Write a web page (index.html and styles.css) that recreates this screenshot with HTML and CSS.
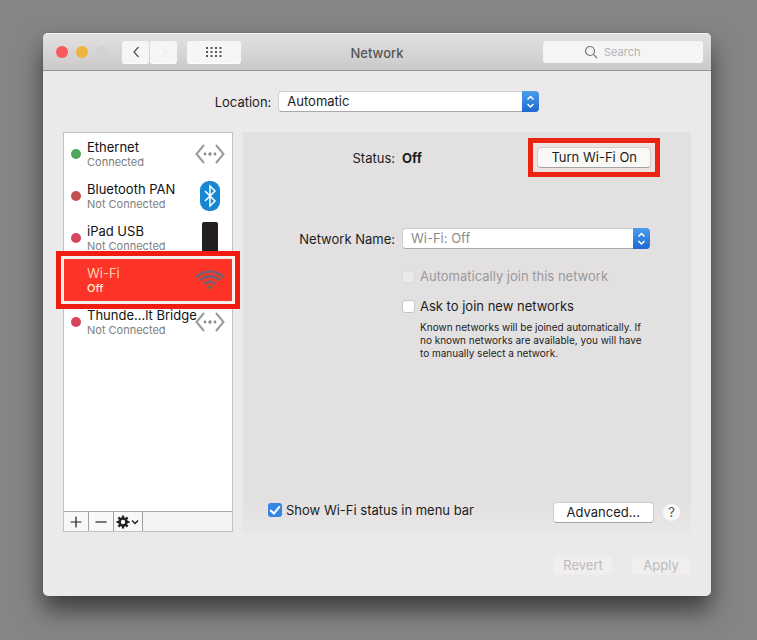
FILE: index.html
```html
<!DOCTYPE html>
<html lang="en">
<head>
<meta charset="utf-8">
<title>Network</title>
<link rel="stylesheet" href="styles.css">
</head>
<body>
<svg class="defs" aria-hidden="true">
  <symbol id="ethernet" viewBox="0 0 32 22">
    <path d="M10 2L2.500 11l7.500 9M22 2L29.500 11l-7.500 9" fill="none" stroke="#9a9a9a" stroke-width="2"/>
    <g fill="#8a8a8a"><circle cx="11" cy="11" r="1.400"/><circle cx="16" cy="11" r="1.700"/><circle cx="21" cy="11" r="1.400"/></g>
  </symbol>
  <symbol id="updown" viewBox="0 0 17 20">
    <path d="M5.500 8L8.500 5l3 3M5.500 12.500l3 3 3-3" fill="none" stroke="#fff" stroke-width="1.500"/>
  </symbol>
</svg>
<main class="window">
  <header class="titlebar">
    <div class="tools">
      <div class="lights"><i class="light close"></i><i class="light minimize"></i><i class="light"></i></div>
      <div class="nav">
        <button class="tool" aria-label="Back"><svg width="10" height="14" viewBox="0 0 10 14"><path d="M7.500 2L3 7l4.500 5" fill="none" stroke="#555" stroke-width="1.300"/></svg></button>
        <button class="tool" aria-label="Forward" disabled><svg width="10" height="14" viewBox="0 0 10 14"><path d="M3 2l4.500 5L3 12" fill="none" stroke="#ededed" stroke-width="1.300"/></svg></button>
      </div>
      <button class="tool wide" aria-label="Show all"><svg width="16" height="14" viewBox="0 0 16 14"><path d="M0 3h16M0 7h16M0 11h16" stroke="#555" stroke-width="2" stroke-dasharray="2 2.500"/></svg></button>
    </div>
    <h1>Network</h1>
    <div class="search">
      <svg width="14" height="14" viewBox="0 0 14 14" fill="none" stroke="#777" stroke-width="1.200"><circle cx="6" cy="6" r="4.500"/><path d="M9.300 9.300L13 13"/></svg>
      <input type="search" placeholder="Search" aria-label="Search">
    </div>
  </header>
  <div class="content">
    <div class="location">
      <label for="location">Location:</label>
      <div class="popup"><select id="location"><option>Automatic</option></select><svg class="cap"><use href="#updown"/></svg></div>
    </div>
    <div class="columns">
      <aside class="sidebar">
        <ul class="services">
          <li class="service"><i class="dot on"></i><div class="info"><b>Ethernet</b><span>Connected</span></div><svg class="icon"><use href="#ethernet"/></svg></li>
          <li class="service"><i class="dot off"></i><div class="info"><b>Bluetooth PAN</b><span>Not Connected</span></div>
            <svg class="icon tall" viewBox="0 0 32 32"><rect x="6" y="1" width="20" height="30" rx="9" fill="#1787d4"/><path d="M11 11l10 10-5 5V6l5 5-10 10" fill="none" stroke="#fff" stroke-width="1.500"/></svg></li>
          <li class="service"><i class="dot off pink"></i><div class="info"><b>iPad USB</b><span>Not Connected</span></div>
            <svg class="icon tall" viewBox="0 0 32 32"><rect x="8" y="0" width="16" height="31" rx="2" fill="#231f20"/></svg></li>
          <li class="service selected"><i class="dot"></i><div class="info"><b>Wi-Fi</b><span>Off</span></div>
            <svg class="icon" viewBox="0 0 32 22" fill="none" stroke="#75606e" stroke-width="2.600"><path d="M2 8.500C10 .5 22 .5 30 8.500M6 11.500C12 6 20 6 26 11.500M10.500 15c3.500-3 7.500-3 11 0"/><path d="M13 17.500c2-1.500 4-1.500 6 0L16 21z" fill="#6b6a50" stroke="none"/></svg></li>
          <li class="service"><i class="dot off pink"></i><div class="info"><b>Thunde…lt Bridge</b><span>Not Connected</span></div><svg class="icon"><use href="#ethernet"/></svg></li>
        </ul>
        <div class="actions">
          <button aria-label="Add"><svg width="12" height="12" viewBox="0 0 12 12"><path d="M6 .5v11M.5 6h11" stroke="#222" stroke-width="1.200"/></svg></button>
          <button aria-label="Remove"><svg width="12" height="12" viewBox="0 0 12 12"><path d="M.5 6h11" stroke="#222" stroke-width="1.200"/></svg></button>
          <button class="gear" aria-label="Service options"><svg width="24" height="14" viewBox="0 0 24 14" fill="none" stroke="#222"><circle cx="7" cy="7" r="3.500" stroke-width="2.600"/><path d="M7 .5v3M7 10.500v3M.5 7h3M10.500 7h3M2.400 2.400l2.200 2.200M9.400 9.400l2.200 2.200M11.600 2.400L9.400 4.600M4.600 9.400l-2.200 2.200" stroke-width="2.200"/><path d="M16 5.500l3 3 3-3" stroke-width="1.500"/></svg></button>
        </div>
      </aside>
      <section class="panel">
        <div class="field status">
          <span class="label">Status:</span><strong>Off</strong>
          <div class="callout"><button class="button turn-on">Turn Wi-Fi On</button></div>
        </div>
        <div class="field">
          <label class="label" for="network">Network Name:</label>
          <div class="popup"><select id="network" class="muted"><option>Wi-Fi: Off</option></select><svg class="cap"><use href="#updown"/></svg></div>
        </div>
        <div class="options">
          <label class="check disabled"><input type="checkbox" disabled>Automatically join this network</label>
          <label class="check"><input type="checkbox">Ask to join new networks</label>
          <p>Known networks will be joined automatically. If no known networks are available, you will have to manually select a network.</p>
        </div>
        <div class="bottom">
          <label class="check compact"><input type="checkbox" checked>Show Wi-Fi status in menu bar</label>
          <button class="button advanced">Advanced...</button>
          <button class="help" aria-label="Help">?</button>
        </div>
      </section>
    </div>
    <footer class="footer">
      <button class="button" disabled>Revert</button>
      <button class="button" disabled>Apply</button>
    </footer>
  </div>
</main>
</body>
</html>
```
FILE: styles.css
```css
* { box-sizing: border-box; }

body {
  margin: 0;
  min-height: 100vh;
  padding: 33px 46px 44px 43px;
  background: #858585;
  color: #1c1c1c;
  font: 13px/16px Inter, "Liberation Sans", sans-serif;
}

button, select, input { font: inherit; color: inherit; margin: 0; }
.defs { position: absolute; width: 0; height: 0; }

.window {
  border-radius: 5px;
  background: #ebe9ea;
  box-shadow: 0 0 1px #444, 0 14px 24px rgba(0, 0, 0, .55);
}

.titlebar {
  display: grid;
  grid-template-columns: 1fr auto 1fr;
  align-items: center;
  height: 38px;
  padding: 0 8px;
  border-top: 1px solid #f4f4f4;
  border-bottom: 1px solid #959395;
  border-radius: 5px 5px 0 0;
  background: linear-gradient(#e2e0e1, #cbc9ca);
}

.titlebar h1 { margin: 2px 0 0; font-size: 13px; font-weight: 500; color: #555; }
.tools { display: flex; align-items: center; }
.lights { display: flex; gap: 8px; margin-left: 5px; }
.light { width: 12px; height: 12px; border-radius: 50%; background: #d3d1d2; }
.close { background: #f9595c; }
.minimize { background: #eeb43b; }
.nav { display: flex; gap: 1px; margin: 0 10px 0 14px; }

.tool {
  display: flex;
  align-items: center;
  justify-content: center;
  width: 27px;
  height: 22px;
  padding: 0;
  border: 0;
  border-radius: 3px;
  background: #f6f6f6;
  box-shadow: 0 1px 0 #fdfdfd;
}
.tool.wide { width: 54px; }

.search {
  display: flex;
  justify-self: end;
  align-items: center;
  gap: 6px;
  width: 160px;
  height: 22px;
  padding-left: 41px;
  border-radius: 3px;
  background: #f6f5f6;
}
.search svg { flex: none; }
.search input { width: 80px; padding: 0; border: 0; background: none; font-size: 11px; }
.search input::placeholder { color: #b4b4b4; }

.content { padding: 20px 20px 21px; }
.location { display: flex; justify-content: center; align-items: center; gap: 7px; }
.location .popup { width: 261px; }

.popup { position: relative; height: 21px; }
.popup select {
  display: block;
  width: 100%;
  height: 100%;
  padding: 0 22px 1px 8px;
  border: 1px solid #cfcdce;
  border-bottom-color: #a9a9a9;
  border-radius: 4px;
  background: #fff;
  appearance: none;
}
.popup .muted { color: #8b8b8b; }
.cap {
  position: absolute;
  top: 0;
  right: 0;
  width: 17px;
  height: 100%;
  border-radius: 0 4px 4px 0;
  background: linear-gradient(#4a9ee9, #1f69d2);
  pointer-events: none;
}

.columns { display: flex; gap: 10px; margin-top: 20px; }

.sidebar {
  display: flex;
  flex: none;
  flex-direction: column;
  width: 170px;
  min-height: 400px;
  border: 1px solid #c2c2c2;
  background: #fff;
}
.services { flex: 1; margin: 0; padding: 0; list-style: none; }
.service {
  display: flex;
  align-items: center;
  gap: 6px;
  height: 42px;
  padding: 0 6px 0 7px;
}
.dot { flex: none; width: 10px; height: 10px; border-radius: 50%; }
.on { background: #4da75c; }
.off { background: #c44f50; }
.pink { background: #d6455c; }
.info { flex: 1; white-space: nowrap; }
.info b { display: block; font-weight: 400; line-height: 15px; color: #111; }
.info span { display: block; font-size: 11px; line-height: 14px; color: #7d7d7d; }
.icon { flex: none; width: 32px; height: 22px; margin-left: -12px; }
.icon.tall { height: 32px; }

.selected {
  position: relative;
  background: #fd3427;
  box-shadow: 0 0 0 3px #fff0ee, 0 0 0 8px #f01c10;
}
.selected .info b { color: #ffd3b0; }
.selected .info span { color: #fff0d8; font-weight: 500; }

.actions { display: flex; height: 20px; border-top: 1px solid #a8a8a8; background: #f4f4f4; }
.actions button {
  display: flex;
  align-items: center;
  justify-content: center;
  width: 25px;
  padding: 0;
  border: 0;
  border-right: 1px solid #a0a0a0;
  background: #f8f8f8;
}
.actions .gear { width: 29px; }

.panel {
  display: flex;
  flex: 1;
  flex-direction: column;
  padding: 15px 11px 9px 25px;
  background: linear-gradient(#e2e0e1 92%, #e8e6e7);
}
.field {
  display: grid;
  grid-template-columns: 127px 1fr;
  align-items: center;
  column-gap: 7px;
  margin-right: 30px;
}
.status { grid-template-columns: 127px 1fr auto; margin: -9px 20px 51px 0; }
.label { text-align: right; white-space: nowrap; }
strong { font-weight: 700; }

.button {
  height: 21px;
  padding: 0 13px 1px;
  border: 1px solid #cdcbcc;
  border-bottom-color: #a5a5a5;
  border-radius: 4px;
  background: #fff;
}
.button:disabled { border-color: #eeeced; background: #f0eeef; color: #bcbabb; }
.callout { display: flex; padding: 4px; border: 5px solid #ea2410; background: #f1e2e2; }
.turn-on { background: #f9f9f7; }

.options { margin: 19px 30px 0 134px; }
.check { display: flex; align-items: center; gap: 5px; height: 16px; white-space: nowrap; }
.options .check { margin-bottom: 14px; }
.check.compact { gap: 4px; }
.check input {
  width: 13px;
  height: 13px;
  border: 1px solid #c4c4c4;
  border-radius: 3px;
  background: #fff;
  appearance: none;
}
.check input:checked {
  display: grid;
  place-items: center;
  width: 14px;
  height: 14px;
  border: 0;
  background: #3485e4;
}
.check input:checked::after {
  content: "";
  width: 4px;
  height: 8px;
  margin-bottom: 2px;
  border: solid #fff;
  border-width: 0 2px 2px 0;
  rotate: 40deg;
}
.disabled { color: #9b999a; }
.check input:disabled { border-color: #dcdadb; background: #eae8e9; }
.options p { margin: -7px 0 0 18px; font-size: 10px; line-height: 13px; }

.bottom { display: flex; align-items: flex-start; margin-top: auto; }
.advanced { margin-left: auto; }
.help {
  align-self: center;
  width: 17px;
  height: 17px;
  margin-left: 9px;
  padding: 0;
  border: 0;
  border-radius: 50%;
  background: #f7f9f8;
  color: #555;
  line-height: 17px;
}

.footer { display: flex; justify-content: flex-end; gap: 18px; margin-top: 24px; }
.footer .button { width: 60px; height: 19px; padding: 0; line-height: 17px; }
```
